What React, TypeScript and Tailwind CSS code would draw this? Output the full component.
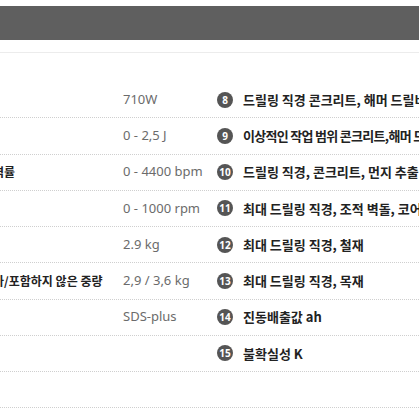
const rows = [
  { label: "", value: "710W", no: 8, text: "드릴링 직경 콘크리트, 해머 드릴비트", tight: false },
  { label: "", value: "0 - 2,5 J", no: 9, text: "이상적인 작업 범위 콘크리트,해머 드릴비트", tight: true },
  { label: "타격률", value: "0 - 4400 bpm", no: 10, text: "드릴링 직경, 콘크리트, 먼지 추출 포함", tight: false },
  { label: "", value: "0 - 1000 rpm", no: 11, text: "최대 드릴링 직경, 조적 벽돌, 코어 비트", tight: false },
  { label: "", value: "2.9 kg", no: 12, text: "최대 드릴링 직경, 철재", tight: false },
  { label: "추가/포함하지 않은 중량", value: "2,9 / 3,6 kg", no: 13, text: "최대 드릴링 직경, 목재", tight: false },
  { label: "", value: "SDS-plus", no: 14, text: "진동배출값 ah", tight: false },
  { label: "", value: "", no: 15, text: "불확실성 K", tight: false },
  { label: "", value: "", no: 0, text: "", tight: false },
];

export default function App() {
  return (
    <div className="w-[419px] h-[419px] overflow-hidden bg-white font-['Noto_Sans','Noto_Sans_CJK_KR',sans-serif]">
      <div className="pt-[6px]">
        <div className="h-[34px] bg-[#5f5f5f]" />
      </div>
      <div className="mt-[12px] h-px bg-[#ececec]" />
      <div className="pt-[29px]">
        {rows.map((row, i) => (
          <div
            key={i}
            className="flex h-[36.25px] items-center whitespace-nowrap border-b border-dotted border-[#cfcfcf]"
          >
            <div className="ml-[-18px] w-[141px] shrink-0 text-[12px] font-bold text-[#222] font-['Noto_Sans_CJK_KR',sans-serif]">
              {row.label}
            </div>
            <div className="w-[94px] shrink-0 text-[13px] text-[#6b6b6b]">{row.value}</div>
            {row.no > 0 && (
              <div className="flex shrink-0 items-center">
                <span className="flex h-[16px] w-[16px] items-center justify-center rounded-full bg-[#555] text-[10px] font-bold leading-none text-white">
                  {row.no}
                </span>
                <span
                  className={
                    row.tight
                      ? "ml-[10px] text-[13px] font-bold tracking-[-0.7px] text-[#222] font-['Noto_Sans_CJK_KR',sans-serif]"
                      : "ml-[10px] text-[13px] font-bold text-[#222] font-['Noto_Sans_CJK_KR',sans-serif]"
                  }
                >
                  {row.text}
                </span>
              </div>
            )}
          </div>
        ))}
      </div>
    </div>
  );
}
